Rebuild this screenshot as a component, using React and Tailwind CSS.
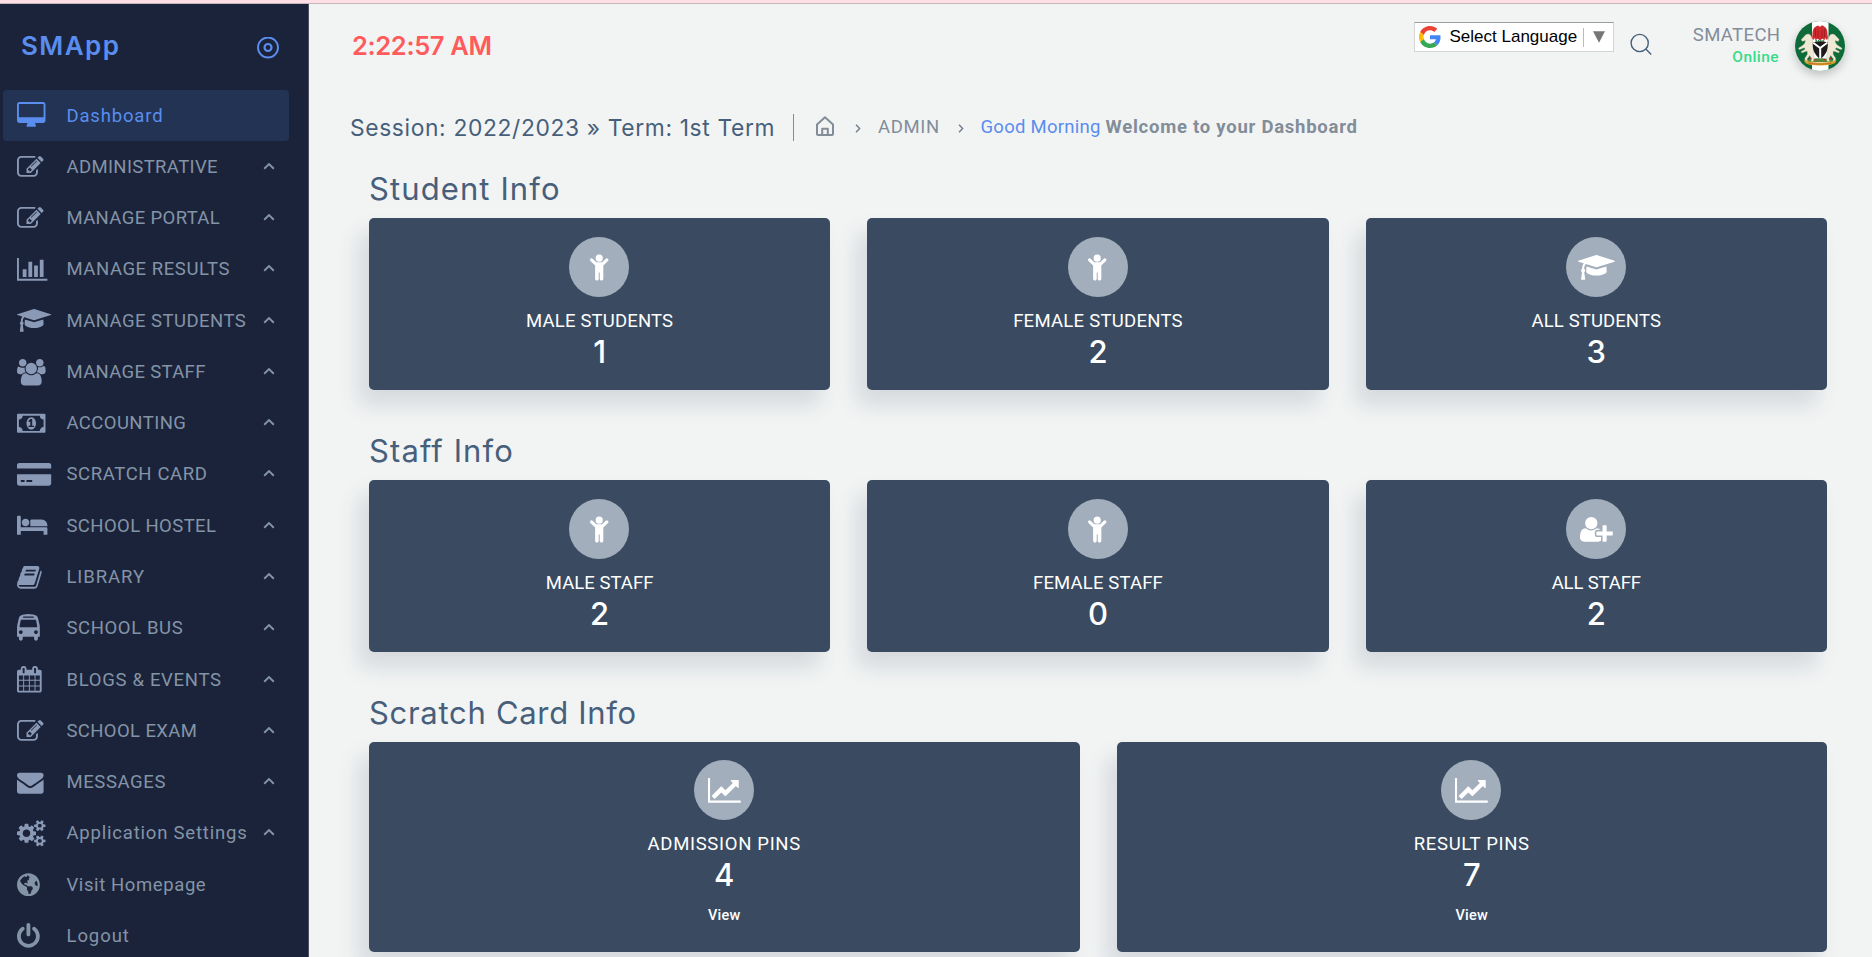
import { FaGlobeAmericas } from "react-icons/fa";

const PATHS = {
  desktop: [1920, "M1792 992v-832q0-13-9.5-22.5t-22.5-9.5h-1600q-13 0-22.5 9.5t-9.5 22.5v832q0 13 9.5 22.5t22.5 9.5h1600q13 0 22.5-9.5t9.5-22.5zm128-832v1088q0 66-47 113t-113 47h-544q0 37 16 77.5t32 71 16 43.5q0 26-19 45t-45 19h-512q-26 0-45-19t-19-45q0-14 16-44t32-70 16-78h-544q-66 0-113-47t-47-113v-1088q0-66 47-113t113-47h1600q66 0 113 47t47 113z"],
  edit: [1792, "M888 1184l116-116-152-152-116 116v56h96v96h56zm440-720q-16-16-33 1l-350 350q-17 17-1 33t33-1l350-350q17-17 1-33zm80 594v190q0 119-84.5 203.5t-203.5 84.5h-832q-119 0-203.5-84.5t-84.5-203.5v-832q0-119 84.5-203.5t203.5-84.5h832q63 0 117 25 15 7 18 23 3 17-9 29l-49 49q-14 14-32 8-23-6-45-6h-832q-66 0-113 47t-47 113v832q0 66 47 113t113 47h832q66 0 113-47t47-113v-126q0-13 9-22l64-64q15-15 35-7t20 29zm-96-738l288 288-672 672h-288v-288zm444 132l-92 92-288-288 92-92q28-28 68-28t68 28l152 152q28 28 28 68t-28 68z"],
  bars: [2048, "M640 896v512h-256v-512h256zm384-512v1024h-256v-1024h256zm1024 1152v128h-2048v-1536h128v1408h1920zm-640-896v768h-256v-768h256zm384-384v1152h-256v-1152h256z"],
  cap: [2304, "M1774 836l18 316q4 69-82 128t-235 93.5-323 34.5-323-34.5-235-93.5-82-128l18-316 574 181q22 7 48 7t48-7zm530-324q0 23-22 31l-1120 352q-4 1-10 1t-10-1l-652-206q-43 34-71 111.5t-34 178.5q63 36 63 109 0 69-58 107l58 433q2 14-8 25-9 11-24 11h-192q-15 0-24-11-10-11-8-25l58-433q-58-38-58-107 0-73 65-111 11-207 98-330l-333-104q-22-8-22-31t22-31l1120-352q4-1 10-1t10 1l1120 352q22 8 22 31z"],
  users: [1920, "M593 896q-162 5-265 128h-134q-82 0-138-40.5t-56-118.5q0-353 124-353 6 0 43.5 21t97.5 42.5 119 21.5q67 0 133-23-5 37-5 66 0 159 93 293zm1071 637q0 120-73 189.5t-194 69.5h-874q-121 0-194-69.5t-73-189.5q0-53 3.5-103.5t14-109 26.5-108.5 43-97.5 62-81 85.5-53.5 111.5-20q10 0 43 21.5t73 48 107 48 135 21.5 135-21.5 107-48 73-48 43-21.5q61 0 111.5 20t85.5 53.5 62 81 43 97.5 26.5 108.5 14 109 3.5 103.5zm-1024-1277q0 106-75 181t-181 75-181-75-75-181 75-181 181-75 181 75 75 181zm704 384q0 159-112.5 271.5t-271.5 112.5-271.5-112.5-112.5-271.5 112.5-271.5 271.5-112.5 271.5 112.5 112.5 271.5zm576 225q0 78-56 118.5t-138 40.5h-134q-103-123-265-128 93-134 93-293 0-29-5-66 66 23 133 23 59 0 119-21.5t97.5-42.5 43.5-21q124 0 124 353zm-128-609q0 106-75 181t-181 75-181-75-75-181 75-181 181-75 181 75 75 181z"],
  money: [1920, "M768 1152h384v-96h-128v-448h-114l-148 137 77 80q42-37 55-57h2v288h-128v96zm512-256q0 70-21 142t-59.5 134-101.5 101-138 39-138-39-101.5-101-59.5-134-21-142 21-142 59.5-134 101.5-101 138-39 138 39 101.5 101 59.5 134 21 142zm512 256v-512q-106 0-181-75t-75-181h-1152q0 106-75 181t-181 75v512q106 0 181 75t75 181h1152q0-106 75-181t181-75zm128-832v1152q0 26-19 45t-45 19h-1792q-26 0-45-19t-19-45v-1152q0-26 19-45t45-19h1792q26 0 45 19t19 45z"],
  card: [2304, "M0 1504v-608h2304v608q0 66-47 113t-113 47h-1984q-66 0-113-47t-47-113zm640-224v128h384v-128h-384zm-384 0v128h256v-128h-256zm1888-1152q66 0 113 47t47 113v224h-2304v-224q0-66 47-113t113-47h1984z"],
  bed: [2048, "M256 1024h1728q26 0 45 19t19 45v448h-256v-256h-1536v256h-256v-1216q0-26 19-45t45-19h128q26 0 45 19t19 45v704zm576-320q0-106-75-181t-181-75-181 75-75 181 75 181 181 75 181-75 75-181zm1216 256v-64q0-159-112.5-271.5t-271.5-112.5h-704q-26 0-45 19t-19 45v384h1152z"],
  book: [1664, "M1639 478q40 57 18 129l-275 906q-19 64-76.5 107.5t-122.5 43.5h-923q-77 0-148.5-53.5t-99.5-131.5q-24-67-2-127 0-4 3-27t4-37q1-8-3-21.5t-3-19.5q2-11 8-21t16.5-23.5 16.5-23.5q23-38 45-91.5t30-91.5q3-10 .5-30t-.5-28q3-11 17-28t17-23q21-36 42-92t25-90q1-9-2.5-32t.5-28q4-13 22-30.5t22-22.5q19-26 42.5-84.5t27.5-96.5q1-8-3-25.5t-2-26.5q2-8 9-18t18-23 17-21q8-12 16.5-30.5t15-35 16-36 19.5-32 26.5-23.5 36-11.5 47.5 5.5l-1 3q38-9 51-9h761q74 0 114 56t18 130l-274 906q-36 119-71.5 153.5t-128.5 34.5h-869q-27 0-38 15-11 16-1 43 24 70 144 70h923q29 0 56-15.5t35-41.5l300-987q7-22 5-57 38 15 59 43zm-1064 2q-4 13 2 22.5t20 9.5h608q13 0 25.5-9.5t16.5-22.5l21-64q4-13-2-22.5t-20-9.5h-608q-13 0-25.5 9.5t-16.5 22.5zm-83 256q-4 13 2 22.5t20 9.5h608q13 0 25.5-9.5t16.5-22.5l21-64q4-13-2-22.5t-20-9.5h-608q-13 0-25.5 9.5t-16.5 22.5z"],
  bus: [1536, "M384 1152q0-53-37.5-90.5t-90.5-37.5-90.5 37.5-37.5 90.5 37.5 90.5 90.5 37.5 90.5-37.5 37.5-90.5zm1024 0q0-53-37.5-90.5t-90.5-37.5-90.5 37.5-37.5 90.5 37.5 90.5 90.5 37.5 90.5-37.5 37.5-90.5zm-44-395l-72-384q-5-23-22.5-37.5t-40.5-14.5h-918q-23 0-40.5 14.5t-22.5 37.5l-72 384q-5 30 14 53t49 23h1062q30 0 49-23t14-53zm-226-613q0-20-14-34t-34-14h-640q-20 0-34 14t-14 34 14 34 34 14h640q20 0 34-14t14-34zm400 725v603h-128v128q0 53-37.5 90.5t-90.5 37.5-90.5-37.5-37.5-90.5v-128h-768v128q0 53-37.5 90.5t-90.5 37.5-90.5-37.5-37.5-90.5v-128h-128v-603q0-112 25-223l103-454q9-78 97.5-137t230-89 312.5-30 312.5 30 230 89 97.5 137l105 454q23 102 23 223z"],
  calendar: [1664, "M128 1664h288v-288h-288v288zm352 0h320v-288h-320v288zm-352-352h288v-320h-288v320zm352 0h320v-320h-320v320zm-352-384h288v-288h-288v288zm736 736h320v-288h-320v288zm-384-736h320v-288h-320v288zm768 736h288v-288h-288v288zm-384-352h320v-320h-320v320zm-352-864v-288q0-13-9.5-22.5t-22.5-9.5h-64q-13 0-22.5 9.5t-9.5 22.5v288q0 13 9.5 22.5t22.5 9.5h64q13 0 22.5-9.5t9.5-22.5zm736 864h288v-320h-288v320zm-384-384h320v-288h-320v288zm384 0h288v-288h-288v288zm32-480v-288q0-13-9.5-22.5t-22.5-9.5h-64q-13 0-22.5 9.5t-9.5 22.5v288q0 13 9.5 22.5t22.5 9.5h64q13 0 22.5-9.5t9.5-22.5zm384-64v1280q0 52-38 90t-90 38h-1408q-52 0-90-38t-38-90v-1280q0-52 38-90t90-38h128v-96q0-66 47-113t113-47h64q66 0 113 47t47 113v96h384v-96q0-66 47-113t113-47h64q66 0 113 47t47 113v96h128q52 0 90 38t38 90z"],
  mail: [1792, "M1792 710v794q0 66-47 113t-113 47h-1472q-66 0-113-47t-47-113v-794q44 49 101 87 362 246 497 345 57 42 92.5 65.5t94.5 48 110 24.5h2q51 0 110-24.5t94.5-48 92.5-65.5q170-123 498-345 57-39 100-87zm0-294q0 79-49 151t-122 123q-376 261-468 325-10 7-42.5 31t-54 38.5-52 32.5-57.5 27-50 9h-2q-23 0-50-9t-57.5-27-52-32.5-54-38.5-42.5-31q-91-64-262-182.5t-205-142.5q-62-42-117-115.5t-55-136.5q0-78 41.5-130t118.5-52h1472q65 0 112.5 47t47.5 113z"],
  cogs: [1920, "M896 896q0-106-75-181t-181-75-181 75-75 181 75 181 181 75 181-75 75-181zm768 512q0-52-38-90t-90-38-90 38-38 90q0 53 37.5 90.5t90.5 37.5 90.5-37.5 37.5-90.5zm0-1024q0-52-38-90t-90-38-90 38-38 90q0 53 37.5 90.5t90.5 37.5 90.5-37.5 37.5-90.5zm-384 421v185q0 10-7 19.5t-16 10.5l-155 24q-11 35-32 76 34 48 90 115 7 11 7 20 0 12-7 19-23 30-82.5 89.5t-78.5 59.5q-11 0-21-7l-115-90q-37 19-77 31-11 108-23 155-7 24-30 24h-186q-11 0-20-7.5t-10-17.5l-23-153q-34-10-75-31l-118 89q-7 7-20 7-11 0-21-8-144-133-144-160 0-9 7-19 10-14 41-53t47-61q-23-44-35-82l-152-24q-10-1-17-9.5t-7-19.5v-185q0-10 7-19.5t16-10.5l155-24q11-35 32-76-34-48-90-115-7-11-7-20 0-12 7-20 22-30 82-89t79-59q11 0 21 7l115 90q34-18 77-32 11-108 23-154 7-24 30-24h186q11 0 20 7.5t10 17.5l23 153q34 10 75 31l118-89q8-7 20-7 11 0 21 8 144 133 144 160 0 8-7 19-12 16-42 54t-45 60q23 48 34 82l152 23q10 2 17 10.5t7 19.5zm640 533v140q0 16-149 31-12 27-30 52 51 113 51 138 0 4-4 7-122 71-124 71-8 0-46-47t-52-68q-20 2-30 2t-30-2q-14 21-52 68t-46 47q-2 0-124-71-4-3-4-7 0-25 51-138-18-25-30-52-149-15-149-31v-140q0-16 149-31 13-29 30-52-51-113-51-138 0-4 4-7 4-2 35-20t59-34 30-16q8 0 46 46.5t52 67.5q20-2 30-2t30 2q51-71 92-112l6-2q4 0 124 70 4 3 4 7 0 25-51 138 17 23 30 52 149 15 149 31zm0-1024v140q0 16-149 31-12 27-30 52 51 113 51 138 0 4-4 7-122 71-124 71-8 0-46-47t-52-68q-20 2-30 2t-30-2q-14 21-52 68t-46 47q-2 0-124-71-4-3-4-7 0-25 51-138-18-25-30-52-149-15-149-31v-140q0-16 149-31 13-29 30-52-51-113-51-138 0-4 4-7 4-2 35-20t59-34 30-16q8 0 46 46.5t52 67.5q20-2 30-2t30 2q51-71 92-112l6-2q4 0 124 70 4 3 4 7 0 25-51 138 17 23 30 52 149 15 149 31z"],
  power: [1536, "M1536 896q0 156-61 298t-164 245-245 164-298 61-298-61-245-164-164-245-61-298q0-182 80.5-343t226.5-270q43-32 95.5-25t83.5 50q32 42 24.5 94.5t-49.5 84.5q-98 74-151.5 181t-53.5 228q0 104 40.5 198.5t109.5 163.5 163.5 109.5 198.5 40.5 198.5-40.5 163.5-109.5 109.5-163.5 40.5-198.5q0-121-53.5-228t-151.5-181q-42-32-49.5-84.5t24.5-94.5q31-43 84-50t95 25q146 109 226.5 270t80.5 343zm-640-768v640q0 52-38 90t-90 38-90-38-38-90v-640q0-52 38-90t90-38 90 38 38 90z"],
  child: [1152, "M1124 493l-292 292v824q0 46-33 79t-79 33-79-33-33-79v-384h-64v384q0 46-33 79t-79 33-79-33-33-79v-824l-292-292q-28-28-28-68t28-68q29-28 68.5-28t67.5 28l228 228h368l228-228q28-28 68-28t68 28q28 29 28 68.5t-28 67.5zM800 320a224 224 0 1 1-448 0a224 224 0 1 1 448 0z"],
  userPlus: [2048, "M704 896q-159 0-271.5-112.5t-112.5-271.5 112.5-271.5 271.5-112.5 271.5 112.5 112.5 271.5-112.5 271.5-271.5 112.5zm960 128h352q13 0 22.5 9.5t9.5 22.5v192q0 13-9.5 22.5t-22.5 9.5h-352v352q0 13-9.5 22.5t-22.5 9.5h-192q-13 0-22.5-9.5t-9.5-22.5v-352h-352q-13 0-22.5-9.5t-9.5-22.5v-192q0-13 9.5-22.5t22.5-9.5h352v-352q0-13 9.5-22.5t22.5-9.5h192q13 0 22.5 9.5t9.5 22.5v352zm-736 224q0 52 38 90t90 38h256v238q-68 50-171 50h-874q-121 0-194-69t-73-190q0-53 3.5-103.5t14-109 26.5-108.5 43-97.5 62-81 85.5-53.5 111.5-20q19 0 39 17 79 61 154.5 91.5t164.5 30.5 164.5-30.5 154.5-91.5q20-17 39-17 132 0 217 96h-223q-52 0-90 38t-38 90v192z"],
  line: [2048, "M2048 1536v128h-2048v-1536h128v1408h1920zm-128-1248v435q0 21-19.5 29.5t-35.5-7.5l-121-121-633 633q-10 10-23 10t-23-10l-233-233-416 416-192-192 585-585q10-10 23-10t23 10l233 233 464-464-121-121q-16-16-7.5-35.5t29.5-19.5h435q14 0 23 9t9 23z"],
};

function Icon({ name, className }) {
  const [w, d] = PATHS[name];
  return (
    <svg viewBox={`0 0 ${w} 1792`} className={`w-auto overflow-visible ${className}`} fill="currentColor">
      <path d={d} />
    </svg>
  );
}

const MENU = [
  ["desktop", "Dashboard", "tracking-[0.83px]"],
  ["edit", "ADMINISTRATIVE", "tracking-[0.37px]"],
  ["edit", "MANAGE PORTAL", "tracking-[0.37px]"],
  ["bars", "MANAGE RESULTS", "tracking-[0.56px]"],
  ["cap", "MANAGE STUDENTS", "tracking-[0.46px]"],
  ["users", "MANAGE STAFF", "tracking-[0.33px]"],
  ["money", "ACCOUNTING", "tracking-[0.42px]"],
  ["card", "SCRATCH CARD", "tracking-[0.62px]"],
  ["bed", "SCHOOL HOSTEL", "tracking-[0.4px]"],
  ["book", "LIBRARY", "tracking-[0.92px]"],
  ["bus", "SCHOOL BUS", "tracking-[0.6px]"],
  ["calendar", "BLOGS & EVENTS", "tracking-[0.69px]"],
  ["edit", "SCHOOL EXAM", "tracking-[0.38px]"],
  ["mail", "MESSAGES", "tracking-[0.6px]"],
  ["cogs", "Application Settings", "tracking-[0.8px]"],
  ["globe", "Visit Homepage", "tracking-[0.6px]"],
  ["power", "Logout", "tracking-[0.93px]"],
];

function MenuItem({ icon, label, tracking, active, plain }) {
  return (
    <li
      className={`flex h-[51.27px] shrink-0 items-center rounded-[4px] pl-[14.4px] pr-[14px] ${
        active ? "bg-[#233354] text-[#5a8dee]" : "text-[#8494a7]"
      }`}
    >
      <span className={`flex w-[49.1px] shrink-0 items-center ${active ? "" : plain ? "text-[#8494a7]" : "text-[#8a99b5]"}`}>
        {icon === "globe" ? (
          <FaGlobeAmericas className="h-[23.6px] w-[22.9px]" />
        ) : (
          <Icon name={icon} className="h-[26.6px]" />
        )}
      </span>
      <span className={`flex-1 whitespace-nowrap text-[18.5px] leading-6 ${tracking}`}>{label}</span>
      {!active && !plain && (
        <svg viewBox="0 0 12 8" className="mb-0.5 h-2 w-3" fill="none" stroke="currentColor" strokeWidth="1.9">
          <path d="M1.2 6.7 6 2l4.800 4.700" />
        </svg>
      )}
    </li>
  );
}

function Sidebar() {
  return (
    <aside className="flex w-[309px] shrink-0 flex-col border-r border-[#4a5268] bg-[#1b233a]">
      <div className="flex h-[86px] shrink-0 items-start justify-between pl-[21px] pr-[29px]">
        <span className="mt-[26px] font-[Inter,sans-serif] text-[26px] font-semibold leading-8 tracking-[1.4px] text-[#5a8dee]">SMApp</span>
        <svg viewBox="0 0 22 22" className="mt-[33px] h-[22px] w-[22px]" fill="none" stroke="#5a8dee">
          <circle cx="11" cy="10.500" r="10" strokeWidth="1.9" />
          <circle cx="11" cy="10.500" r="3.500" strokeWidth="2.200" />
        </svg>
      </div>
      <ul className="flex flex-col pl-[3px] pr-[19px]">
        {MENU.map(([icon, label, tracking], i) => (
          <MenuItem key={label} icon={icon} label={label} tracking={tracking} active={i === 0} plain={i > 14} />
        ))}
      </ul>
    </aside>
  );
}

function GoogleLogo() {
  return (
    <svg viewBox="0 0 48 48" className="h-[22px] w-[22px]">
      <path fill="#EA4335" d="M24 9.500c3.540 0 6.710 1.220 9.210 3.600l6.850-6.850C35.900 2.380 30.470 0 24 0 14.620 0 6.510 5.380 2.560 13.220l7.980 6.190C12.430 13.720 17.740 9.500 24 9.500z" />
      <path fill="#4285F4" d="M46.980 24.550c0-1.570-.15-3.090-.38-4.550H24v9.020h12.940c-.58 2.960-2.260 5.480-4.780 7.180l7.730 6c4.510-4.180 7.090-10.360 7.090-17.650z" />
      <path fill="#FBBC05" d="M10.530 28.590c-.48-1.450-.76-2.990-.76-4.590s.27-3.140.76-4.590l-7.980-6.190C.92 16.460 0 20.120 0 24c0 3.880.92 7.540 2.560 10.780l7.970-6.190z" />
      <path fill="#34A853" d="M24 48c6.480 0 11.930-2.130 15.890-5.810l-7.730-6c-2.150 1.450-4.920 2.300-8.160 2.300-6.260 0-11.570-4.220-13.470-9.910l-7.980 6.190C6.510 42.620 14.620 48 24 48z" />
    </svg>
  );
}

function Horse() {
  return (
    <g fill="#efe9d4" stroke="#a5a288" strokeWidth="0.3">
      <path d="M15 13.500c-2-1.200-4.500-.2-5.500 1.600l-3.200 3.300.8 2 3.200-.8c0 2.300-1 3.400-2.500 4.700l-4.500 2.900 1 1.500 5-2 .8 1.500-4 2.200.6 1.500 5.400-1.800.4 3-2.800 4.400.7 3h2.200l-.5-2.600 2.700-3.400 1.700 3.400-.6 2.600h2.500l.6-3.600-.8-5.200c1-3.600.7-6.800-.2-9.800-.5-2.600-.4-5.600-3-8.400z" />
    </g>
  );
}

function Avatar() {
  return (
    <svg viewBox="0 0 50 50" className="h-[50px] w-[50px] rounded-full shadow-[0_4px_10px_rgba(0,0,0,0.22)]">
      <rect width="50" height="50" fill="#0d6b3a" />
      <rect x="17" width="16.500" height="50" fill="#fff" />
      <path d="M25 6c-1.500-2-3.500-1.300-4-.5-2.500.7-3.500 4-3.500 8-.5 2.500-.7 4.500.5 5.500l2-2 .5 2.500 2-2 2.500 2 2.500-2 2 2 .5-2.500 2 2c1.200-1 1-3 .5-5.500 0-4-1-7.300-3.500-8-.8-1.200-2.500-1.500-4 .5z" fill="#cf2a2e" />
      <path d="M20.500 8v8M23 9.500v8M27 9.500v8M29.500 8v8" stroke="#8f1a22" strokeWidth="0.7" />
      <path d="M20.500 19.700h9" stroke="#2f8a4b" strokeWidth="1.400" strokeDasharray="1.500 0.8" />
      <path d="M9 41c4-5 28-5 32 0z" fill="#4f8a3d" />
      <Horse />
      <g transform="matrix(-1 0 0 1 50.500 0)">
        <Horse />
      </g>
      <path d="M17.800 21.500c4.500-1.600 10.200-1.600 14.900 0 .6 7-1.600 12.500-7.450 16.500C19.500 34 17.200 28.500 17.800 21.500z" fill="#1d1a1b" />
      <path d="M18.200 21.800 25.200 27l7-5.200M25.200 27v10.500" fill="none" stroke="#fff" strokeWidth="2" />
      <path d="M14.500 37.500h2M19.500 38.800h2M29 38.800h2M34 37.500h2" stroke="#c8332b" strokeWidth="1.500" />
      <path d="M9 38.500c2 1 3 1.600 5 2 6 1.300 16 1.300 22.500 0 2-.4 3-1 5-2l-1.500 3.800c-2 .2-3 1.300-5 1.500-6 1-13.500 1-20 0-2-.2-3-1.300-4.500-1.500z" fill="#dba32c" />
      <path d="M13.500 42.100c7 1.300 16 1.300 23.500 0" fill="none" stroke="#a9402a" strokeWidth="0.8" strokeDasharray="1.200 0.6" />
    </svg>
  );
}

function TopBar() {
  return (
    <header className="flex h-[82px] shrink-0 items-start pl-[43px] pr-[27px]">
      <div className="mt-[26px] flex-1 font-[Inter,sans-serif] text-[25.5px] font-semibold leading-8 tracking-[-0.35px] text-[#ff5b5c]">2:22:57 AM</div>
      <div className="mt-[18px] flex h-[30px] w-[200px] items-center border border-[#d5d5d5] border-t-[#9b9b9b] bg-white pl-1 font-['Liberation_Sans',sans-serif] text-black">
        <GoogleLogo />
        <span className="ml-[8.500px] w-[128px] whitespace-nowrap text-[17px] leading-5">Select Language</span>
        <span className="ml-[5.500px] h-[19px] w-px bg-[#bbb]" />
        <svg viewBox="0 0 12 12" className="ml-[9px] h-3 w-3" fill="#767676">
          <path d="M0 .3h12L6 11.700z" />
        </svg>
      </div>
      <svg viewBox="0 0 22 22" className="ml-4 mt-[29px] h-[22px] w-[22px]" fill="none" stroke="#475f7b" strokeWidth="1.400">
        <circle cx="9.700" cy="10" r="8.600" />
        <path d="m15.800 16.100 5.400 5.400" />
      </svg>
      <div className="ml-[28px] mt-[20px] flex w-[100px] flex-col items-end">
        <span className="mr-[-0.4px] text-[18.500px] leading-[22px] tracking-[0.37px] text-[#828d99]">SMATECH</span>
        <span className="mr-px text-[15.500px] font-medium leading-[22px] tracking-[0.43px] text-[#39da8a]">Online</span>
      </div>
      <div className="ml-[15px] mt-[17px]">
        <Avatar />
      </div>
    </header>
  );
}

function Crumb() {
  return (
    <svg viewBox="0 0 6 10" className="mt-px h-[9px] w-[6px]" fill="none" stroke="#727e8c" strokeWidth="1.600">
      <path d="m.8.8 4 4.200-4 4.200" />
    </svg>
  );
}

function Breadcrumb() {
  return (
    <div className="flex h-[83px] shrink-0 items-center pl-[41px] text-[18.5px] text-[#828d99]">
      <h5 className="w-[426px] whitespace-nowrap pt-px font-[Inter,sans-serif] text-[22.8px] leading-7 tracking-[0.64px] text-[#475f7b]">
        Session: 2022/2023 » Term: 1st Term
      </h5>
      <span className="ml-[17px] h-[27px] w-px bg-[#828d99]" />
      <svg viewBox="0 0 18 20" className="mb-[3px] ml-[22px] h-5 w-[18px]" fill="none" stroke="currentColor" strokeWidth="2" strokeLinejoin="round">
        <path d="M1 8.600 9 1.200l8 7.400V18a1 1 0 0 1-1 1H2a1 1 0 0 1-1-1z" />
        <path d="M6.200 18.800v-6h5.600v6" />
      </svg>
      <span className="ml-[21px] flex"><Crumb /></span>
      <span className="ml-[17px] w-[62px] tracking-[0.65px]">ADMIN</span>
      <span className="ml-[18px] flex"><Crumb /></span>
      <span className="ml-[16.5px] w-[125px] whitespace-nowrap tracking-[0.26px] text-[#5a8dee]">Good Morning</span>
      <span className="whitespace-nowrap font-bold tracking-[0.75px]">Welcome to your Dashboard</span>
    </div>
  );
}

function StatCard({ icon, title, tracking, value, link }) {
  return (
    <div
      className={`flex flex-1 flex-col items-center rounded-[5px] bg-[#3a4b61] text-white shadow-[-10px_15px_22px_0_rgba(25,42,70,0.13)] ${
        link ? "h-[210px] pt-[18px]" : "h-[172px] pt-[19px]"
      }`}
    >
      <div className="mr-[0.6px] flex h-[60px] w-[60px] shrink-0 items-center justify-center rounded-full bg-[#a3aebc]">
        <Icon name={icon} className="h-[28.7px]" />
      </div>
      <div className={`mt-[10px] whitespace-nowrap text-[18.5px] leading-[28px] ${tracking}`}>{title}</div>
      <div className="font-[Inter,sans-serif] text-[31px] font-medium leading-[34px]">{value}</div>
      {link && <a className="mt-[14px] text-[14.500px] font-medium leading-5 tracking-[0.2px]">{link}</a>}
    </div>
  );
}

function Section({ title, tracking, cards }) {
  return (
    <section className="mb-[41px] shrink-0">
      <h2 className={`mb-[9px] font-[Inter,sans-serif] text-[31px] leading-10 text-[#475f7b] ${tracking}`}>{title}</h2>
      <div className="flex gap-[37px]">
        {cards.map((c) => (
          <StatCard key={c.title} {...c} />
        ))}
      </div>
    </section>
  );
}

const SECTIONS = [
  {
    title: "Student Info",
    tracking: "tracking-[1.1px]",
    cards: [
      { icon: "child", title: "MALE STUDENTS", value: 1, tracking: "tracking-[0.17px]" },
      { icon: "child", title: "FEMALE STUDENTS", value: 2, tracking: "tracking-[0.27px]" },
      { icon: "cap", title: "ALL STUDENTS", value: 3, tracking: "tracking-[0.11px]" },
    ],
  },
  {
    title: "Staff Info",
    tracking: "tracking-[1.1px]",
    cards: [
      { icon: "child", title: "MALE STAFF", value: 2, tracking: "tracking-[0.05px]" },
      { icon: "child", title: "FEMALE STAFF", value: 0, tracking: "tracking-[0.15px]" },
      { icon: "userPlus", title: "ALL STAFF", value: 2, tracking: "tracking-[-0.12px]" },
    ],
  },
  {
    title: "Scratch Card Info",
    tracking: "tracking-[0.7px]",
    cards: [
      { icon: "line", title: "ADMISSION PINS", value: 4, link: "View", tracking: "tracking-[0.68px]" },
      { icon: "line", title: "RESULT PINS", value: 7, link: "View", tracking: "tracking-[0.67px]" },
    ],
  },
];

export default function App() {
  return (
    <div className="flex h-[957px] w-[1872px] flex-col overflow-hidden bg-[#f2f4f4] font-[Roboto,sans-serif]">
      <div className="h-1 shrink-0 border-b border-[#c9b3bb] bg-[#ffdfe6]" />
      <div className="flex min-h-0 flex-1">
        <Sidebar />
        <main className="flex min-w-0 flex-1 flex-col overflow-hidden">
          <TopBar />
          <Breadcrumb />
          <div className="flex flex-col pl-[60px] pr-[45px]">
            {SECTIONS.map((s) => (
              <Section key={s.title} {...s} />
            ))}
          </div>
        </main>
      </div>
    </div>
  );
}
